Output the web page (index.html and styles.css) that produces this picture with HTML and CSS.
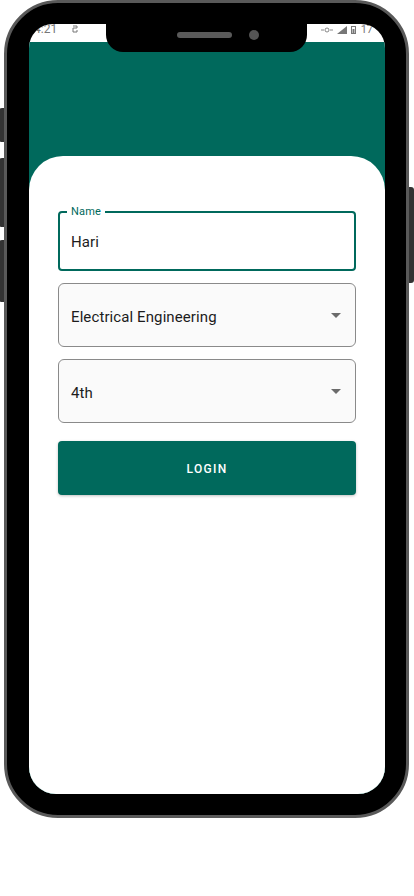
FILE: index.html
```html
<!DOCTYPE html>
<html lang="en">
<head>
<meta charset="utf-8">
<title>Login</title>
<link rel="stylesheet" href="styles.css">
</head>
<body>
<div class="phone">
  <span class="side-btn left b1"></span>
  <span class="side-btn left b2"></span>
  <span class="side-btn left b3"></span>
  <span class="side-btn right b4"></span>
  <div class="notch">
    <span class="speaker"></span>
    <span class="camera"></span>
  </div>
  <div class="screen">
    <div class="status">
      <div class="status-left">
        <span class="time">4:21</span>
        <svg class="sicon" width="6" height="8" viewBox="0 0 6 8"><path d="M1 1h4v2H1v4h4V5" fill="none" stroke="#777" stroke-width="1"/></svg>
      </div>
      <div class="status-right">
        <svg width="12" height="8" viewBox="0 0 12 8"><path d="M0 4h3M9 4h3" stroke="#888" stroke-width="1"/><circle cx="6" cy="4" r="2" fill="none" stroke="#888" stroke-width="1"/></svg>
        <svg width="10" height="8" viewBox="0 0 10 8"><path d="M0 8L10 0V8Z" fill="#777"/></svg>
        <svg width="5" height="8" viewBox="0 0 5 8"><rect x="0.5" y="0.5" width="4" height="7" fill="none" stroke="#777"/><rect x="1.5" y="3" width="2" height="4" fill="#777"/></svg>
        <span class="pct">17</span>
      </div>
    </div>
    <div class="header">
      <main class="card">
        <form class="form">
          <label class="outlined focused">
            <span class="legend">Name</span>
            <span class="value">Hari</span>
          </label>
          <div class="select">
            <span class="value">Electrical Engineering</span>
            <span class="caret"></span>
          </div>
          <div class="select">
            <span class="value">4th</span>
            <span class="caret"></span>
          </div>
          <button type="button" class="login">LOGIN</button>
        </form>
      </main>
    </div>
  </div>
</div>
</body>
</html>
```

FILE: styles.css
```css
* { box-sizing: border-box; }
html { background: #fff; }
html, body { margin: 0; padding: 0; }
body { font-family: Roboto, "Noto Sans", "Liberation Sans", sans-serif; }

.phone {
  position: relative;
  margin-left: 4px;
  width: 405px;
  height: 818px;
  background: #000;
  border: 3px solid #595959;
  border-radius: 54px;
  padding: 21px 21px 21px 22px;
}

.side-btn {
  position: absolute;
  width: 5px;
  background: #333;
}
.side-btn.left { left: -8px; border-radius: 3px 0 0 3px; }
.side-btn.right { right: -8px; border-radius: 0 3px 3px 0; }
.b1 { top: 105px; height: 34px; }
.b2 { top: 155px; height: 69px; }
.b3 { top: 237px; height: 62px; }
.b4 { top: 184px; height: 96px; }

.notch {
  position: absolute;
  left: 99px;
  top: 18px;
  width: 201px;
  height: 31px;
  background: #000;
  border-radius: 0 0 17px 17px;
  z-index: 2;
}
.speaker {
  position: absolute;
  left: 71px;
  top: 11px;
  width: 55px;
  height: 6px;
  border-radius: 3px;
  background: #5a5a5a;
}
.camera {
  position: absolute;
  left: 143px;
  top: 9px;
  width: 10px;
  height: 10px;
  border-radius: 50%;
  background: #555;
}

.screen {
  width: 356px;
  height: 770px;
  background: #fff;
  border-radius: 24px 24px 27px 27px;
  overflow: hidden;
  display: flex;
  flex-direction: column;
}

.status {
  height: 18px;
  display: flex;
  justify-content: space-between;
  align-items: flex-start;
  padding: 0 12px 0 5px;
  color: #777;
  font-size: 12px;
  line-height: 12px;
}
.status-left, .status-right {
  display: flex;
  align-items: center;
  margin-top: -1px;
  gap: 6px;
}
.status-left .sicon { margin-left: 9px; }
.status-right { gap: 4px; margin-top: 0; }
.status-right svg { display: block; }
.pct { font-size: 11px; margin-left: 1px; }

.header {
  flex: 1;
  background: #00695c;
  padding-top: 114px;
  display: flex;
  flex-direction: column;
}

.card {
  flex: 1;
  background: #fff;
  border-radius: 34px 34px 0 0;
  padding: 55px 29px 0;
}

.form {
  display: flex;
  flex-direction: column;
}

.outlined {
  position: relative;
  height: 60px;
  border: 2px solid #00695c;
  border-radius: 4px;
  display: flex;
  align-items: center;
  padding: 0 11px;
}
.legend {
  position: absolute;
  left: 7px;
  top: -8px;
  padding: 0 4px;
  background: #fff;
  color: #00695c;
  font-size: 11px;
  line-height: 14px;
  letter-spacing: 0.2px;
}
.value {
  font-size: 15px;
  color: #1c1c1c;
  letter-spacing: 0.1px;
}
.outlined .value { margin-top: 1px; }
.select .value { margin-top: 3px; }

.select {
  margin-top: 12px;
  height: 64px;
  border: 1px solid #8a8a8a;
  border-radius: 6px;
  background: #fafafa;
  display: flex;
  align-items: center;
  justify-content: space-between;
  padding: 0 14px 0 12px;
}
.caret {
  width: 0;
  height: 0;
  border-left: 5px solid transparent;
  border-right: 5px solid transparent;
  border-top: 5px solid #6b6b6b;
  margin-top: 0;
}

.login {
  margin-top: 18px;
  height: 54px;
  border: 0;
  border-radius: 4px;
  background: #00695c;
  color: #fff;
  font-family: Roboto, "Noto Sans", sans-serif;
  font-size: 12px;
  font-weight: 500;
  letter-spacing: 1.3px;
  box-shadow: 0 1px 3px rgba(0,0,0,0.25);
  padding: 2px 0 0;
}
```
